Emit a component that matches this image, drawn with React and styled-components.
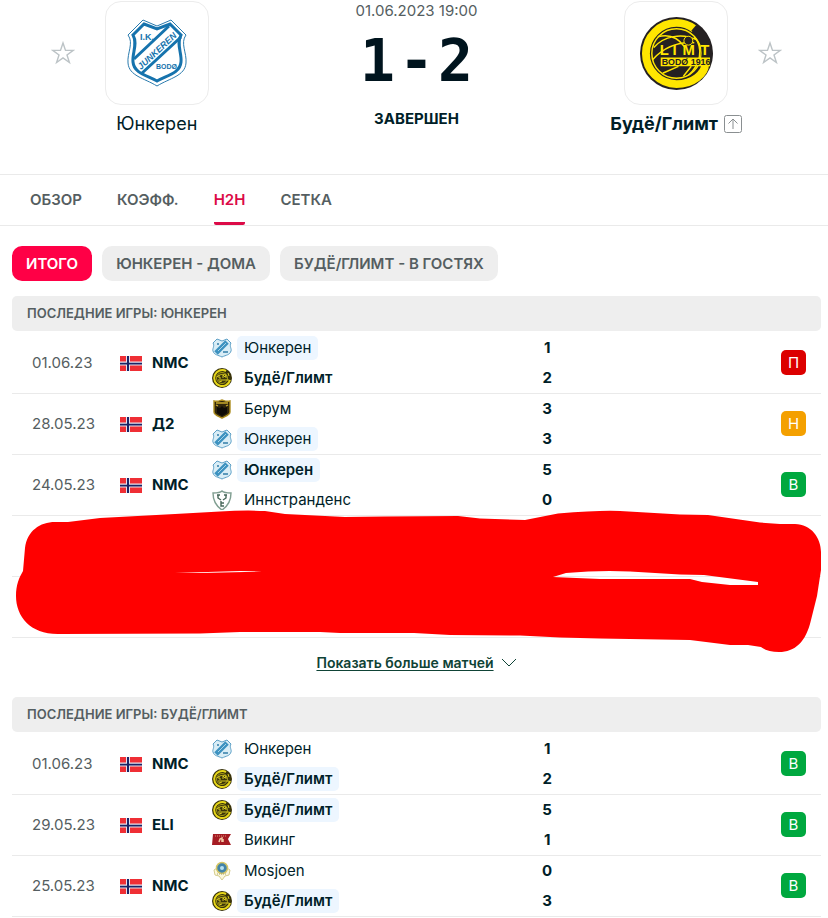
import React from "react";
import styled, { createGlobalStyle } from "styled-components";

const GlobalStyle = createGlobalStyle`
  *, *::before, *::after { box-sizing: border-box; }
  body {
    margin: 0;
    background: #fff;
    color: #001e28;
    font-family: Inter, "Liberation Sans", sans-serif;
    font-size: 15px;
    line-height: 20px;
  }
  button { font: inherit; color: inherit; border: 0; padding: 0; background: none; cursor: pointer; }
  a { color: inherit; }
  svg { display: block; flex: none; }
`;

const Header = styled.header`
  display: grid;
  grid-template-columns: 1fr 1fr 1fr;
  padding: 1px 22px 0 27px;
  height: 175px;
  border-bottom: 1px solid #eaeaea;
`;

const Participant = styled.div`
  display: flex;
  flex-direction: column;
  align-items: center;
  gap: 9px;
`;

const CrestLine = styled.div`
  display: grid;
  grid-template-columns: 1fr 104px 1fr;
  column-gap: 30px;
  align-items: center;
  width: 100%;
`;

const StarButton = styled.button`
  grid-row: 1;
  grid-column: ${(p) => (p.$side === "left" ? 1 : 3)};
  justify-self: ${(p) => (p.$side === "left" ? "end" : "start")};
`;

const CrestLink = styled.a`
  grid-row: 1;
  grid-column: 2;
  display: flex;
  align-items: center;
  justify-content: center;
  height: 104px;
  border: 1px solid #ececec;
  border-radius: 16px;
`;

const ParticipantName = styled.a`
  display: flex;
  align-items: center;
  gap: 6px;
  font-size: 18px;
  font-weight: ${(p) => (p.$winner ? 700 : 400)};
  text-decoration: none;
  white-space: nowrap;
`;

const ScoreBlock = styled.div`
  display: flex;
  flex-direction: column;
  align-items: center;
`;

const StartTime = styled.time`
  color: #555e61;
`;

const Score = styled.div`
  display: flex;
  gap: 4px;
  margin: 10px 0 18px;
  font: 700 58px/60px "DejaVu Sans Mono", monospace;
  color: #00141e;
`;

const Status = styled.div`
  font-size: 15px;
  font-weight: 700;
`;

const Tabs = styled.nav`
  display: flex;
  gap: 35px;
  padding: 0 30px;
  height: 51px;
  border-bottom: 1px solid #eaeaea;
`;

const Tab = styled.a`
  display: flex;
  align-items: center;
  padding-top: 3px;
  border-bottom: 3px solid ${(p) => (p.$active ? "#dc0a47" : "transparent")};
  border-radius: 2px;
  color: ${(p) => (p.$active ? "#dc0a47" : "#555e61")};
  font-weight: 600;
  text-decoration: none;
`;

const Content = styled.main`
  padding: 20px 7px 0 12px;
`;

const Filters = styled.div`
  display: flex;
  gap: 10px;
  margin-bottom: 15px;
`;

const Filter = styled.button`
  height: 35px;
  padding: 0 14px;
  border-radius: 10px;
  background: ${(p) => (p.$active ? "#ff0046" : "#eee")};
  color: ${(p) => (p.$active ? "#fff" : "#555e61")};
  font-size: 15px;
  font-weight: 600;
  white-space: nowrap;
`;

const SectionTitle = styled.h2`
  margin: 0 0 2px;
  padding: 0 15px;
  border-radius: 5px;
  background: #eee;
  color: #555e61;
  font-size: 13px;
  font-weight: 600;
  line-height: 35px;
`;

const TableArea = styled.div`
  position: relative;
`;

const Table = styled.table`
  width: 100%;
  table-layout: fixed;
  border-collapse: separate;
  border-spacing: 0;
`;

const Column = styled.col`
  width: ${(p) => p.$width};
`;

const Cell = styled.td`
  height: 61px;
  padding: 0;
  border-bottom: 1px solid #eaeaea;
`;

const DateCell = styled(Cell)`
  padding-left: 20px;
  color: #555e61;
`;

const League = styled.div`
  display: flex;
  align-items: center;
  gap: 10px;
  font-weight: 700;
`;

const TeamLine = styled.div`
  display: flex;
  align-items: center;
  gap: 5px;
  height: 30px;
`;

const TeamName = styled.span`
  padding: 1px 7px;
  line-height: 22px;
  border-radius: 5px;
  background: ${(p) => (p.$current ? "#edf6ff" : "transparent")};
  font-weight: ${(p) => (p.$bold ? 600 : 400)};
`;

const Goals = styled.div`
  line-height: 30px;
  font-weight: 700;
  text-align: center;
`;

const resultColors = { П: "#dc0000", Н: "#f4a000", В: "#00a83f" };

const Result = styled.div`
  width: 25px;
  margin: 0 15px 1px auto;
  border-radius: 5px;
  background: ${(p) => resultColors[p.$kind]};
  color: #fff;
  line-height: 25px;
  text-align: center;
`;

const MarkerDrawing = styled.svg`
  position: absolute;
  left: 0;
  bottom: -20px;
  width: 100%;
  height: 150px;
`;

const MoreLine = styled.div`
  display: flex;
  justify-content: center;
  height: 59px;
  padding-top: 15px;
`;

const MoreButton = styled.button`
  display: flex;
  align-items: center;
  gap: 7px;
  height: 20px;
  color: #0f4336;
  font-size: 14px;
  font-weight: 600;
`;

const Underlined = styled.span`
  text-decoration: underline;
  text-underline-offset: 2px;
`;

const Star = () => (
  <svg width="24" height="24" viewBox="0 0 24 24" fill="none" stroke="#bcc3c6" strokeWidth="1.4">
    <path d="M12 2l2.5 7.4h7.8L16 14l2.4 7.5L12 16.9l-6.4 4.6L8 14 1.700 9.400h7.800z" />
  </svg>
);

const Advanced = () => (
  <svg width="18" height="18" viewBox="0 0 18 18" fill="none" stroke="#8a8f91">
    <rect x=".5" y=".5" width="17" height="17" rx="2" />
    <path d="M9 14V4M4.500 8.500L9 4l4.500 4.500" />
  </svg>
);

const Flag = () => (
  <svg width="22" height="15" viewBox="0 0 22 15" role="img" aria-label="Норвегия">
    <path fill="#ef2f35" d="M0 0h22v15H0z" />
    <path fill="#e9e3ee" d="M6 0h4v15H6zM0 5.500h22v4H0z" />
    <path fill="#1a2466" d="M7 0h2v15H7zM0 6.700h22v1.700H0z" />
  </svg>
);

const JunkerenCrest = () => (
  <svg width="60" height="68" viewBox="0 0 60 68" fill="none" role="img" aria-label="Юнкерен">
    <path fill="#fff" stroke="#2a7bae" strokeWidth="1" d="M16 1l14 6 14-6 15 15c-6 8 1 18 0 28C58 57 43 59 30 67 17 59 2 57 1 44 0 34 7 24 1 16z" />
    <path stroke="#1673ad" strokeWidth="3" d="M17 5l13 5 13-5 11 11c-5 9 1 18 0 27-1 11-13 13-24 19C19 56 7 54 6 43c-1-9 5-18 0-27z" />
    <path stroke="#1673ad" strokeWidth="3" d="M7 40L42 7M14 55L54 18" />
    <g fill="#1673ad" fontFamily="Liberation Sans, sans-serif" fontWeight="700">
      <text x="13" y="21" fontSize="9">I.K.</text>
      <text x="29" y="50" fontSize="7">BODØ</text>
      <text transform="translate(14 51) rotate(-43)" fontSize="9" fontStyle="italic">JUNKEREN</text>
    </g>
  </svg>
);

const GlimtCrest = () => (
  <svg width="73" height="73" viewBox="0 0 74 74" role="img" aria-label="Будё/Глимт">
    <circle cx="37" cy="37" r="37" fill="#252122" />
    <path fill="none" stroke="#ffe600" strokeWidth="8" d="M55 12A31 31 0 0 0 37 6C20 6 6 20 6 37S20 68 37 68 66 57 66 48" />
    <g fill="none" stroke="#ffe600" strokeWidth="1.500">
      <circle cx="37" cy="37" r="25" />
      <path d="M14 31C24 19 43 16 57 23M18 20C29 17 38 20 45 30M13 43C24 31 37 25 55 26M55 20C65 32 61 49 49 59M23 57l16-7M44 60l8-10" />
    </g>
    <path fill="#252122" d="M57 8C69 15 75 28 73 43H62C64 30 61 19 52 14z" />
    <circle cx="49" cy="24" r="4.500" fill="#252122" stroke="#ffe600" />
    <path fill="#ffe600" d="M21 41h50v9H21z" />
    <g fontFamily="Liberation Sans, sans-serif" fontWeight="700">
      <text x="22" y="48.500" fontSize="9" fill="#252122">BODØ 1916</text>
      <g fill="#ffe600" fontSize="15">
        <text x="20" y="39">L</text><text x="33" y="39">I</text>
        <text x="43" y="39">M</text><text x="61" y="39">T</text>
      </g>
    </g>
  </svg>
);

const smallCrests = {
  "Юнкерен": (
    <>
      <path fill="#d9edf6" stroke="#5c9fc6" d="M5 1l5 2 5-2 4 4c-2 3 1 6 0 8-1 4-5 4-9 6-4-2-8-2-9-6-1-2 2-5 0-8z" />
      <path stroke="#3d92c0" strokeWidth="5" d="M4 15L15 4" />
      <path stroke="#a8d3e8" d="M6 13l8-8" />
      <path stroke="#337da8" strokeWidth="1.500" d="M11 14h5M5 6h2" />
    </>
  ),
  "Берум": (
    <>
      <path fill="#30260c" stroke="#ad8e20" strokeWidth="1.400" d="M2 2c3 1 5 0 8-1 3 1 5 2 8 1v11c0 3-4 4-8 6-4-2-8-3-8-6z" />
      <path stroke="#c8a92d" strokeWidth="1.300" d="M4 4h12M4 6l2 1M14 7l2-1" />
      <path fill="#0e0b06" d="M5 8l3 1 2-2 2 2 3-1v6l-5 3-5-3z" />
    </>
  ),
  "Иннстранденс": (
    <>
      <path fill="#fff" stroke="#809e91" strokeWidth="1.400" d="M1 3c4 0 7 0 9-2 2 2 5 2 9 2 0 8-3 13-9 17C4 16 1 11 1 3z" />
      <path stroke="#476759" strokeWidth="1.400" d="M6 5v3l3 2M14 5v3l-3 2M5 5h3M12 5h3M9 11v5h3M9 13h3" />
    </>
  ),
  "Викинг": (
    <>
      <path fill="#a51c23" d="M1 4h18l-3 5 3 6H0z" />
      <path stroke="#db8f78" strokeDasharray="1 1" d="M3 6h11" />
      <path stroke="#f1c6a3" strokeWidth="1.500" d="M7 12l1-3 2-1v4M11 9v3" />
    </>
  ),
  Mosjoen: (
    <>
      <path fill="#fcf8dc" stroke="#d5cc8d" d="M5 7l-3 2 1 5 4 1 3 4 3-4 4-1 1-5-3-2" />
      <circle cx="10" cy="7" r="5.500" fill="#4284a8" stroke="#d5c665" strokeWidth="1.500" />
      <circle cx="10" cy="7" r="2" fill="#b6e0ef" />
      <path stroke="#a6a174" strokeDasharray="1 1" d="M5 13h10" />
    </>
  ),
  "Будё/Глимт": (
    <>
      <circle cx="10" cy="10" r="10" fill="#39330a" />
      <path stroke="#e7d719" strokeWidth="2" d="M14 3A8 8 0 1 0 18 12" />
      <circle cx="10" cy="10" r="5.500" stroke="#a99d19" />
      <path stroke="#d8ca20" d="M5 9c3-3 6-3 9-2M6 12h11M7 7v3h2M11 10V7l2 2 1-2v3M16 5l1 3M7 14l3-1" />
    </>
  ),
};

const SmallCrest = ({ team }) => (
  <svg width="20" height="20" viewBox="0 0 20 20" fill="none" aria-hidden="true">
    {smallCrests[team]}
  </svg>
);

const Marker = () => (
  <MarkerDrawing viewBox="12 508 809 150" preserveAspectRatio="none" aria-hidden="true">
    <path
      fill="#f00"
      fillRule="evenodd"
      d="M55 522L68 522 100 518 175 514 220 511.500Q245 510 265 511L285 514 345 517 385 516.500 458 516 480 518.500 525 520 558 513.500Q600 510 620 511L680 514.500 708 515 760 522.500 780 524H795C811 524 821 538 821 552V570L817 596 811 620C806 642 795 652 779 652Q768 652 761 647L748 645H730L690 640 600 638.500 560 637.500 520 635.500 450 635 414 633H340L320 632H240L200 633.500 60 634C31 635 16 617 16 596 16 585 19 578 23 571L25 548C27 531 40 522 55 522Z
      M175 573L200 573 262 571.500 240 571Z
      M553 577L566 573Q600 570 630 571.500L680 574.500 704 575 758 582V585H730L702 582 690 579H600Z"
    />
  </MarkerDrawing>
);

const homeGames = [
  { date: "01.06.23", league: "NMC", teams: ["Юнкерен", "Будё/Глимт"], goals: [1, 2], winner: 1, result: "П" },
  { date: "28.05.23", league: "Д2", teams: ["Берум", "Юнкерен"], goals: [3, 3], winner: -1, result: "Н" },
  { date: "24.05.23", league: "NMC", teams: ["Юнкерен", "Иннстранденс"], goals: [5, 0], winner: 0, result: "В" },
];

const awayGames = [
  { date: "01.06.23", league: "NMC", teams: ["Юнкерен", "Будё/Глимт"], goals: [1, 2], winner: 1, result: "В" },
  { date: "29.05.23", league: "ELI", teams: ["Будё/Глимт", "Викинг"], goals: [5, 1], winner: 0, result: "В" },
  { date: "25.05.23", league: "NMC", teams: ["Mosjoen", "Будё/Глимт"], goals: [0, 3], winner: 1, result: "В" },
];

const Games = ({ games, current, emptyRows = 0 }) => (
  <Table aria-label={`Последние игры: ${current}`}>
    <colgroup>
      <Column $width="108px" />
      <Column $width="92px" />
      <Column />
      <Column $width="30px" />
      <Column $width="32%" />
    </colgroup>
    <tbody>
      {games.map((g) => (
        <tr key={g.date}>
          <DateCell>{g.date}</DateCell>
          <Cell><League><Flag />{g.league}</League></Cell>
          <Cell>
            {g.teams.map((t, i) => (
              <TeamLine key={t}>
                <SmallCrest team={t} />
                <TeamName $current={t === current} $bold={g.winner === i}>{t}</TeamName>
              </TeamLine>
            ))}
          </Cell>
          <Cell>{g.goals.map((n, i) => <Goals key={i}>{n}</Goals>)}</Cell>
          <Cell><Result $kind={g.result}>{g.result}</Result></Cell>
        </tr>
      ))}
      {Array.from({ length: emptyRows }, (_, i) => (
        <tr key={i}><Cell colSpan={5} /></tr>
      ))}
    </tbody>
  </Table>
);

export default function App() {
  return (
    <>
      <GlobalStyle />
      <Header>
        <Participant>
          <CrestLine>
            <StarButton $side="left" aria-label="Добавить Юнкерен в избранное"><Star /></StarButton>
            <CrestLink href="#junkeren"><JunkerenCrest /></CrestLink>
          </CrestLine>
          <ParticipantName href="#junkeren">Юнкерен</ParticipantName>
        </Participant>
        <ScoreBlock>
          <StartTime>01.06.2023 19:00</StartTime>
          <Score><span>1</span><span>-</span><span>2</span></Score>
          <Status>ЗАВЕРШЕН</Status>
        </ScoreBlock>
        <Participant>
          <CrestLine>
            <CrestLink href="#glimt"><GlimtCrest /></CrestLink>
            <StarButton $side="right" aria-label="Добавить Будё/Глимт в избранное"><Star /></StarButton>
          </CrestLine>
          <ParticipantName href="#glimt" $winner>Будё/Глимт<Advanced /></ParticipantName>
        </Participant>
      </Header>
      <Tabs>
        <Tab href="#summary">ОБЗОР</Tab>
        <Tab href="#odds">КОЭФФ.</Tab>
        <Tab href="#h2h" $active aria-current="page">H2H</Tab>
        <Tab href="#draw">СЕТКА</Tab>
      </Tabs>
      <Content>
        <Filters>
          <Filter $active aria-pressed="true">ИТОГО</Filter>
          <Filter>ЮНКЕРЕН - ДОМА</Filter>
          <Filter>БУДЁ/ГЛИМТ - В ГОСТЯХ</Filter>
        </Filters>
        <section>
          <SectionTitle>ПОСЛЕДНИЕ ИГРЫ: ЮНКЕРЕН</SectionTitle>
          <TableArea>
            <Games games={homeGames} current="Юнкерен" emptyRows={2} />
            <Marker />
          </TableArea>
          <MoreLine>
            <MoreButton>
              <Underlined>Показать больше матчей</Underlined>
              <svg width="16" height="10" viewBox="0 0 16 10" fill="none" stroke="#0f4336">
                <path d="M1 1l7 7 7-7" />
              </svg>
            </MoreButton>
          </MoreLine>
        </section>
        <section>
          <SectionTitle>ПОСЛЕДНИЕ ИГРЫ: БУДЁ/ГЛИМТ</SectionTitle>
          <Games games={awayGames} current="Будё/Глимт" />
        </section>
      </Content>
    </>
  );
}
